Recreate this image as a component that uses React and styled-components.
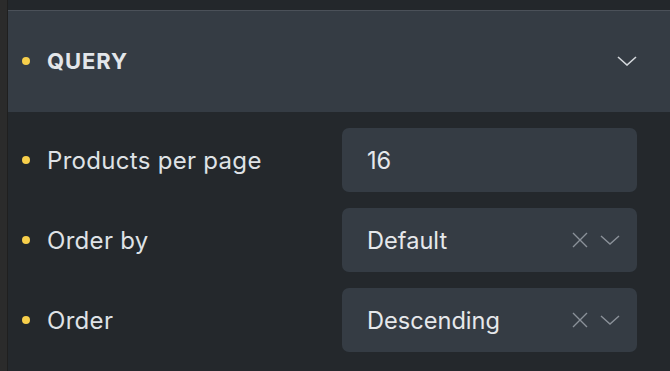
import React from 'react';
import styled, {createGlobalStyle} from 'styled-components';

const GlobalStyle = createGlobalStyle`
    * {
        box-sizing: border-box;
    }

    html, body {
        margin: 0;
        padding: 0;
        background: #24282c;
        font-family: Inter, "Noto Sans", sans-serif;
    }
`;

const fields = [
    {label: 'Products per page', value: '16', select: false},
    {label: 'Order by', value: 'Default', select: true},
    {label: 'Order', value: 'Descending', select: true},
];

const App = () => {
    return (
        <>
            <GlobalStyle/>
            <Page>
                <Gutter/>
                <Panel>
                    <TopBand/>
                    <SectionHeader>
                        <Dot/>
                        <SectionTitle>QUERY</SectionTitle>
                        <HeaderChevron viewBox="0 0 20 10" fill="none">
                            <path d="M1 1l9 8 9-8" stroke="currentColor" strokeWidth="1.6"/>
                        </HeaderChevron>
                    </SectionHeader>
                    <Body>
                        {fields.map((field) => (
                            <Row key={field.label}>
                                <Label>
                                    <Dot/>
                                    <span>{field.label}</span>
                                </Label>
                                <Control>
                                    <Value>{field.value}</Value>
                                    {field.select &&
                                        <Actions>
                                            <svg width="16" height="16" viewBox="0 0 16 16" fill="none">
                                                <path d="M1 1l14 14M15 1L1 15" stroke="currentColor" strokeWidth="1.4"/>
                                            </svg>
                                            <svg width="20" height="10" viewBox="0 0 20 10" fill="none">
                                                <path d="M1 1l9 8 9-8" stroke="currentColor" strokeWidth="1.4"/>
                                            </svg>
                                        </Actions>
                                    }
                                </Control>
                            </Row>
                        ))}
                    </Body>
                </Panel>
            </Page>
        </>
    );
};

const Page = styled.div`
    display: flex;
    width: 670px;
    height: 371px;
    overflow: hidden;
`;

const Gutter = styled.div`
    width: 8px;
    background-color: #2b2b2b;
    border-right: 1px solid #1f1f1f;
`;

const Panel = styled.div`
    flex: 1;
    background-color: #24282c;
    display: flex;
    flex-direction: column;
`;

const TopBand = styled.div`
    height: 10px;
    background-color: #23272b;
`;

const SectionHeader = styled.div`
    height: 102px;
    display: flex;
    align-items: center;
    gap: 17px;
    padding: 0 33px 2px 14px;
    background-color: #353c44;
    border-top: 1px solid #4b5159;
`;

const SectionTitle = styled.div`
    flex: 1;
    font-size: 22px;
    font-weight: 700;
    letter-spacing: 0.9px;
    color: #e3e6ea;
`;

const HeaderChevron = styled.svg`
    width: 20px;
    height: 10px;
    color: #d4d8dc;
`;

const Dot = styled.span`
    width: 8px;
    height: 8px;
    border-radius: 50%;
    background-color: #f7cf4b;
    flex-shrink: 0;
`;

const Body = styled.div`
    display: flex;
    flex-direction: column;
    gap: 16px;
    padding: 16px 33px 0 14px;
`;

const Row = styled.div`
    display: flex;
    align-items: center;
    height: 64px;
`;

const Label = styled.div`
    flex: 1;
    display: flex;
    align-items: center;
    gap: 17px;
    font-size: 24px;
    letter-spacing: 0.3px;
    color: #dfe2e6;
`;

const Control = styled.div`
    width: 295px;
    height: 64px;
    display: flex;
    align-items: center;
    padding: 0 17px 0 25px;
    border-radius: 7px;
    background-color: #353c44;
`;

const Value = styled.div`
    flex: 1;
    font-size: 23.6px;
    color: #e6e8eb;
`;

const Actions = styled.div`
    display: flex;
    align-items: center;
    gap: 12px;
    color: #8b9199;
`;

export default App;
